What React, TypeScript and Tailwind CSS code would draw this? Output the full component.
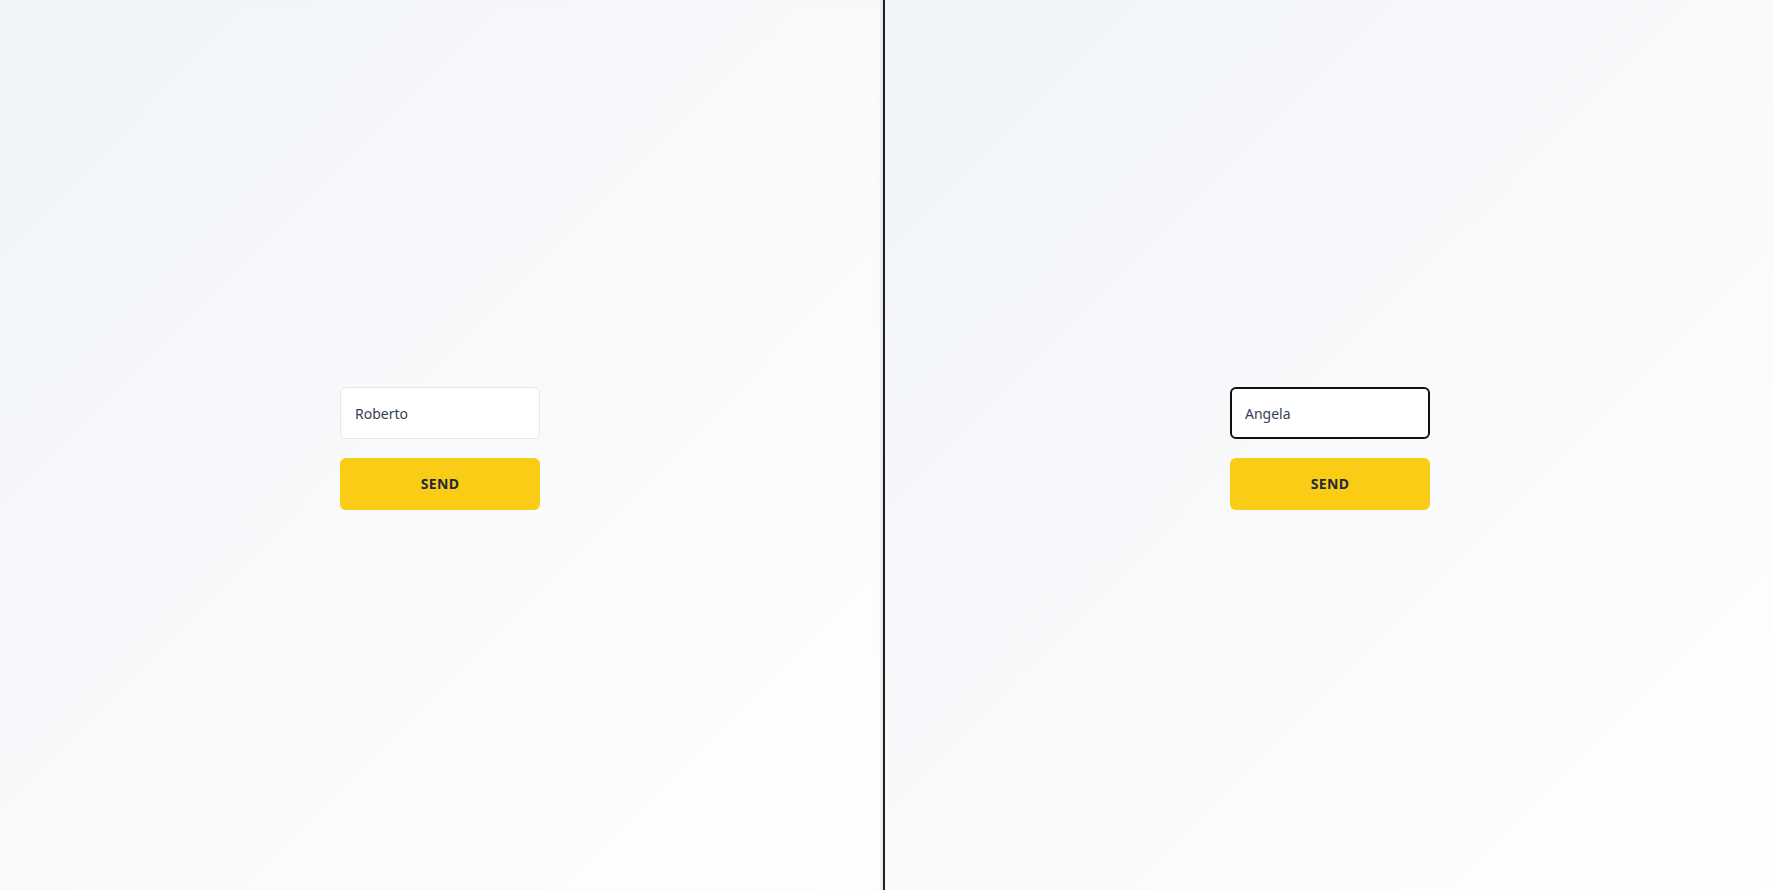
import { useState } from 'react';

function ChatPanel({ name, focused, className }: { name: string; focused?: boolean; className: string }) {
  const [value, setValue] = useState(name);

  return (
    <div className={className}>
      <form className="flex flex-col gap-[19px] w-[200px]" onSubmit={e => e.preventDefault()}>
        <input
          value={value}
          onChange={e => setValue(e.target.value)}
          className={
            focused
              ? 'h-[52px] w-full rounded-md bg-white px-[13px] text-sm text-gray-700 outline-none border-2 border-[#111]'
              : 'h-[52px] w-full rounded-md bg-white px-[14px] text-sm text-gray-700 outline-none border border-gray-200'
          }
        />
        <button
          type="submit"
          className="h-[52px] w-full rounded-md bg-[#facc15] text-sm font-bold text-gray-800 tracking-wide"
        >
          SEND
        </button>
      </form>
    </div>
  );
}

export default function App() {
  return (
    <div className="flex h-screen w-full font-['Noto_Sans',sans-serif]">
      <ChatPanel
        name="Roberto"
        className="w-[883px] shrink-0 flex items-center justify-center pt-[7px] pr-[3px] bg-gradient-to-br from-[#f1f4f8] to-white shadow-[inset_-3px_0_3px_-1px_rgba(0,0,0,0.1)]"
      />
      <div className="w-[2px] shrink-0 bg-[#222]" />
      <ChatPanel
        name="Angela"
        focused
        className="flex-1 flex items-center justify-center pt-[7px] pl-[2px] bg-gradient-to-br from-[#f1f4f8] to-white"
      />
    </div>
  );
}
